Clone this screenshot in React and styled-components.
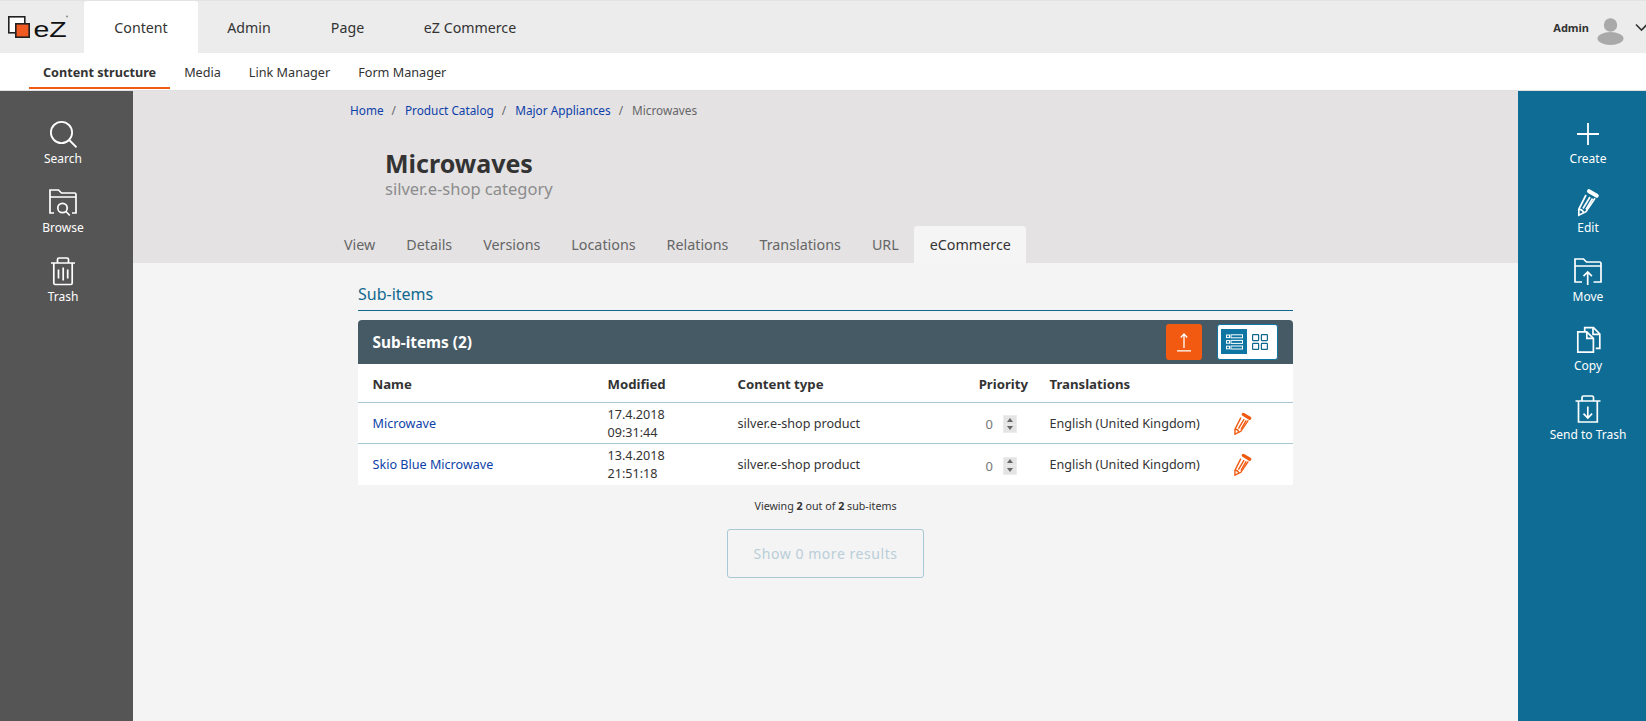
import React from 'react'
import styled, { createGlobalStyle } from 'styled-components'

const Global = createGlobalStyle`
  html, body { margin: 0; padding: 0; height: 100%; background: #f4f4f4; }
  body { font-family: "Noto Sans", "Open Sans", sans-serif; color: #333; overflow: hidden; }
  a { text-decoration: none; }
`

const Page = styled.div`
  display: flex;
  flex-direction: column;
  height: 721px;
`

const TopBar = styled.header`
  display: flex;
  align-items: stretch;
  height: 52px;
  background: #ececec;
  border-top: 1px solid #e4e2e3;
  flex: none;
`

const LogoBox = styled.div`
  width: 84px;
  padding: 13px 0 0 7px;
  box-sizing: border-box;
`

const TopTab = styled.a`
  display: flex;
  align-items: center;
  justify-content: center;
  width: ${p => p.$w}px;
  font-size: 14.2px;
  color: #333;
  background: ${p => (p.$active ? '#fff' : 'transparent')};
  border-radius: 3px 3px 0 0;
`

const UserBox = styled.div`
  margin-left: auto;
  margin-right: -2px;
  display: flex;
  align-items: center;
  font-size: 11px;
  font-weight: 700;
  color: #333;
`

const SubBar = styled.nav`
  display: flex;
  height: 37px;
  padding-left: 29px;
  background: #fff;
  flex: none;
  border-bottom: 1px solid #e0e0e0;
`

const SubLink = styled.a`
  display: flex;
  align-items: center;
  box-sizing: border-box;
  height: 36px;
  padding: 4px 14px 0;
  font-size: 12.65px;
  font-weight: ${p => (p.$active ? 700 : 400)};
  color: #333;
  border-bottom: 2px solid ${p => (p.$active ? '#f15a10' : 'transparent')};
`

const Body = styled.div`
  display: flex;
  flex: 1;
  min-height: 0;
`

const Rail = styled.aside`
  width: ${p => p.$w}px;
  flex: none;
  box-sizing: border-box;
  padding: 27px ${p => p.$padRight || 0}px 0 ${p => p.$padLeft || 0}px;
  background: ${p => p.$bg};
  display: flex;
  flex-direction: column;
  align-items: center;
  gap: 10px;
`

const RailItem = styled.a`
  display: flex;
  flex-direction: column;
  align-items: center;
  height: 59px;
  color: #fff;
  font-size: 12px;
  line-height: 16px;
  white-space: nowrap;
  svg { display: block; margin-bottom: 3px; }
`

const Main = styled.main`
  flex: 1;
  min-width: 0;
`

const Head = styled.section`
  height: 172px;
  background: #e4e2e3;
  display: flex;
  flex-direction: column;
  padding-left: 210px;
`

const Crumbs = styled.ol`
  display: flex;
  list-style: none;
  margin: 0 0 0 7px;
  padding: 10px 0 0;
  height: 19px;
  font-size: 11.8px;
  line-height: 18px;
  color: #666;
`

const Crumb = styled.li`
  a { color: #0d3fa8; }
  & + &::before {
    content: '/';
    padding: 0 9px 0 8px;
    color: #666;
  }
`

const Title = styled.h1`
  margin: 27px 0 0 42px;
  font-size: 25px;
  line-height: 32px;
  font-weight: 700;
  color: #333;
`

const Subtitle = styled.div`
  margin-left: 42px;
  font-size: 16.5px;
  line-height: 20px;
  color: #8c8c8c;
`

const Tabs = styled.div`
  display: flex;
  margin: auto 0 0 1px;
  height: 37px;
`

const Tab = styled.a`
  display: flex;
  align-items: center;
  padding: 0 15.5px;
  font-size: 14.3px;
  color: ${p => (p.$active ? '#333' : '#666')};
  background: ${p => (p.$active ? '#f5f5f5' : 'transparent')};
  border-radius: 3px 3px 0 0;
  &:first-child { padding-left: 0; }
`

const Content = styled.section`
  width: 935px;
  margin-left: 225px;
`

const SectionTitle = styled.h2`
  margin: 0 0 9px;
  padding: 20px 0 4px;
  font-size: 16px;
  line-height: 23px;
  font-weight: 400;
  color: #10688f;
  border-bottom: 1px solid #10688f;
`

const PanelBar = styled.div`
  display: flex;
  align-items: center;
  height: 44px;
  padding: 0 15px 0 14.5px;
  background: #455a65;
  border-radius: 4px 4px 0 0;
  color: #fff;
  font-size: 15.4px;
  font-weight: 700;
`

const UploadBtn = styled.button`
  margin-left: auto;
  width: 36px;
  height: 36px;
  padding: 0;
  display: flex;
  align-items: center;
  justify-content: center;
  background: #f15a10;
  border: 0;
  border-radius: 3px;
`

const Toggle = styled.div`
  margin-left: 15px;
  width: 61px;
  height: 36px;
  box-sizing: border-box;
  padding: 4px 4px 5px 3px;
  display: flex;
  background: #fff;
  border: 1px solid #0f76a3;
  border-radius: 3px;
`

const ToggleOpt = styled.span`
  display: flex;
  align-items: center;
  justify-content: center;
  width: 26px;
  height: 100%;
  background: ${p => (p.$active ? '#0f76a3' : 'transparent')};
`

const Row = styled.div`
  display: grid;
  grid-template-columns: 235px 130px 232px 80px 196px 1fr;
  align-items: center;
  height: ${p => p.$h}px;
  background: #fff;
  font-size: 12.6px;
  line-height: 18px;
  border-bottom: ${p => (p.$last ? '0' : '1px solid #a9c8d6')};
  box-sizing: border-box;
`

const HeadCell = styled.div`
  font-size: 13.2px;
  font-weight: 700;
  padding-top: 1px;
  padding-left: ${p => (p.$right ? 0 : 14.5)}px;
  padding-right: ${p => (p.$right ? 7 : 0)}px;
  text-align: ${p => (p.$right ? 'right' : 'left')};
`

const Cell = styled.div`
  padding: 1px 0 0 14.5px;
`

const NameLink = styled.a`
  color: #0d3fa8;
`

const PriorityCell = styled.div`
  display: flex;
  justify-content: flex-end;
  align-items: center;
  gap: 10px;
  padding: 2px 18px 0 0;
  color: #777;
  font-size: 13px;
`

const Spinner = styled.span`
  display: flex;
  flex-direction: column;
  gap: 1px;
  width: 14px;
  height: 18px;
  padding: 1px;
  background: #ececec;
  box-sizing: border-box;
`

const SpinButton = styled.span`
  flex: 1;
  background: #e4e4e4;
  display: flex;
  align-items: center;
  justify-content: center;
  &::after {
    content: '';
    border-left: 3.5px solid transparent;
    border-right: 3.5px solid transparent;
    border-${p => (p.$down ? 'top' : 'bottom')}: 4px solid #666;
  }
`

const EditCell = styled.div`
  svg { display: block; }
`

const Viewing = styled.p`
  margin: 12px 0 14px;
  text-align: center;
  font-size: 10.7px;
  line-height: 18px;
  color: #333;
`

const MoreBtn = styled.button`
  display: block;
  margin: 0 auto;
  width: 197px;
  height: 49px;
  background: transparent;
  border: 1px solid #a9c8d6;
  border-radius: 3px;
  color: #b9ced8;
  font-family: inherit;
  font-size: 14px;
  letter-spacing: 0.55px;
`

const Logo = () => (
  <svg width="64" height="30" viewBox="0 0 64 30">
    <rect x="1.8" y="2.8" width="16" height="16" fill="#fff" stroke="#222" strokeWidth="1.6" />
    <rect x="8.8" y="9.8" width="13.4" height="13.4" fill="#f15a22" stroke="#222" strokeWidth="1.6" />
    <text transform="translate(26.5 23) scale(1 .8)" fontFamily="Liberation Sans, sans-serif" fontSize="28.5" fill="#111">eZ</text>
    <circle cx="60" cy="2.5" r="1" fill="#888" />
  </svg>
)

const Avatar = () => (
  <svg width="27" height="27" viewBox="0 0 27 27" style={{ margin: '9px 11px 0 8px' }}>
    <circle cx="13.5" cy="7" r="6.7" fill="#a9a9a9" />
    <ellipse cx="13.5" cy="20.5" rx="13" ry="6.5" fill="#a9a9a9" />
  </svg>
)

const Chevron = () => (
  <svg width="13" height="9" viewBox="0 0 13 9">
    <path d="M1 1.5l5.5 5.5L12 1.5" fill="none" stroke="#333" strokeWidth="1.6" />
  </svg>
)

const base = { fill: 'none', stroke: '#fff', strokeWidth: 1.7 }

const SearchIcon = () => (
  <svg width="28" height="30" viewBox="0 0 28 30" {...base} strokeWidth="1.8">
    <circle cx="12.5" cy="14.5" r="10.6" />
    <path d="M20.2 22l7.3 7.3" />
  </svg>
)

const BrowseIcon = () => (
  <svg width="28" height="30" viewBox="0 0 28 30" {...base}>
    <path d="M1 10V3h8.5L12.5 6H25.5Q27 6 27 7.5V10M1 10h26" />
    <path d="M5 26H1V10M23 26H27V10" />
    <circle cx="13.5" cy="21" r="4.7" />
    <path d="M17 24.5l3.8 4" />
  </svg>
)

const TrashIcon = () => (
  <svg width="28" height="30" viewBox="0 0 28 30" {...base}>
    <path d="M2 7h24M8.5 7V3.5A1.5 1.5 0 0 1 10 2h8a1.5 1.5 0 0 1 1.5 1.5V7" />
    <path d="M4.8 7v20a1.5 1.5 0 0 0 1.5 1.5h15.4a1.5 1.5 0 0 0 1.5-1.5V7" />
    <path d="M9.5 13.5v9M14.2 11.5v13M18.7 13.5v9" />
  </svg>
)

const PlusIcon = () => (
  <svg width="28" height="30" viewBox="0 0 28 30" {...base} strokeWidth="1.8">
    <path d="M14 5v22M3 16h22" />
  </svg>
)

const PencilIcon = ({ color = '#fff', size = 28 }) => (
  <svg width={size} height={size * 30 / 28} viewBox="0 0 28 30" fill="none" stroke={color} strokeWidth="1.7">
    <path d="M12 8L4.8 22.3V28.2L12 24.7 21 11.3" />
    <path d="M16 10L9 21.5M18.5 11.5L12 22.5M4.8 22.3C7 22.3 9 23.5 9.5 25.8" />
    <path d="M15 4.2l7.8 4.6" strokeWidth="4" strokeLinecap="round" />
  </svg>
)

const MoveIcon = () => (
  <svg width="28" height="30" viewBox="0 0 28 30" {...base}>
    <path d="M1 10V3h8.5L12.5 6H25.5Q27 6 27 7.5V10M1 10h26" />
    <path d="M8 26H1V10M19.5 26H27V10" />
    <path d="M13.7 29V16M9.5 20.2L13.7 16l4.2 4.2" />
  </svg>
)

const CopyIcon = () => (
  <svg width="28" height="30" viewBox="0 0 28 30" {...base}>
    <path d="M3.8 6.8h9l6.6 6.6V27.2H3.8z" />
    <path d="M12.8 7v6.4h6.4" />
    <path d="M10.7 6.5V2.6h8.8L25.8 9V23.3H21.8" />
    <path d="M19 3v6.4h6.4" />
  </svg>
)

const SendTrashIcon = () => (
  <svg width="28" height="30" viewBox="0 0 28 30" {...base}>
    <path d="M1.5 7h25M8 7V3.5A1.5 1.5 0 0 1 9.5 2h8.5A1.5 1.5 0 0 1 19.5 3.5V7" />
    <path d="M4.5 7v21h18.8V7" />
    <path d="M13.8 12.5V24M9.5 19.7L13.8 24l4.3-4.3" />
  </svg>
)

const UploadIcon = () => (
  <svg width="14" height="20" viewBox="0 0 14 20" fill="none" stroke="#fff" strokeWidth="1.3">
    <path d="M7 16V2M3.8 5.5L7 2l3.2 3.5M0 18.8h14" />
  </svg>
)

const ListIcon = () => (
  <svg width="17" height="16" viewBox="0 0 17 16" fill="none" stroke="#fff" strokeWidth="1">
    <rect x="0.5" y="1" width="3" height="2.6" />
    <rect x="0.5" y="6.6" width="3" height="2.6" />
    <rect x="0.5" y="12.2" width="3" height="2.6" />
    <rect x="5" y="0.8" width="11.5" height="3" />
    <rect x="5" y="6.4" width="11.5" height="3" />
    <rect x="5" y="12" width="11.5" height="3" />
  </svg>
)

const GridIcon = () => (
  <svg width="16" height="16" viewBox="0 0 16 16" fill="none" stroke="#10688f" strokeWidth="1.2">
    <rect x="0.6" y="0.6" width="6" height="6" rx="0.5" />
    <rect x="9.4" y="0.6" width="6" height="6" rx="0.5" />
    <rect x="0.6" y="9.4" width="6" height="6" rx="0.5" />
    <rect x="9.4" y="9.4" width="6" height="6" rx="0.5" />
  </svg>
)

const leftItems = [
  ['Search', SearchIcon],
  ['Browse', BrowseIcon],
  ['Trash', TrashIcon],
]

const rightItems = [
  ['Create', PlusIcon],
  ['Edit', PencilIcon],
  ['Move', MoveIcon],
  ['Copy', CopyIcon],
  ['Send to Trash', SendTrashIcon],
]

const tabs = ['View', 'Details', 'Versions', 'Locations', 'Relations', 'Translations', 'URL']

const rows = [
  { name: 'Microwave', date: '17.4.2018', time: '09:31:44' },
  { name: 'Skio Blue Microwave', date: '13.4.2018', time: '21:51:18', last: true },
]

const App = () => (
  <Page>
    <Global />
    <TopBar>
      <LogoBox><Logo /></LogoBox>
      <TopTab $active $w={114}>Content</TopTab>
      <TopTab $w={102}>Admin</TopTab>
      <TopTab $w={95}>Page</TopTab>
      <TopTab $w={150}>eZ Commerce</TopTab>
      <UserBox>Admin<Avatar /><Chevron /></UserBox>
    </TopBar>
    <SubBar>
      <SubLink $active>Content structure</SubLink>
      <SubLink>Media</SubLink>
      <SubLink>Link Manager</SubLink>
      <SubLink>Form Manager</SubLink>
    </SubBar>
    <Body>
      <Rail $w={133} $bg="#555" $padRight={7}>
        {leftItems.map(([label, Icon]) => (
          <RailItem key={label}><Icon />{label}</RailItem>
        ))}
      </Rail>
      <Main>
        <Head>
          <Crumbs>
            <Crumb><a>Home</a></Crumb>
            <Crumb><a>Product Catalog</a></Crumb>
            <Crumb><a>Major Appliances</a></Crumb>
            <Crumb>Microwaves</Crumb>
          </Crumbs>
          <Title>Microwaves</Title>
          <Subtitle>silver.e-shop category</Subtitle>
          <Tabs>
            {tabs.map(t => <Tab key={t}>{t}</Tab>)}
            <Tab $active>eCommerce</Tab>
          </Tabs>
        </Head>
        <Content>
          <SectionTitle>Sub-items</SectionTitle>
          <PanelBar>
            Sub-items (2)
            <UploadBtn><UploadIcon /></UploadBtn>
            <Toggle>
              <ToggleOpt $active><ListIcon /></ToggleOpt>
              <ToggleOpt><GridIcon /></ToggleOpt>
            </Toggle>
          </PanelBar>
          <Row $h={39}>
            <HeadCell>Name</HeadCell>
            <HeadCell>Modified</HeadCell>
            <HeadCell>Content type</HeadCell>
            <HeadCell $right>Priority</HeadCell>
            <HeadCell>Translations</HeadCell>
            <div />
          </Row>
          {rows.map(r => (
            <Row key={r.name} $h={41} $last={r.last}>
              <Cell><NameLink>{r.name}</NameLink></Cell>
              <Cell>{r.date}<br />{r.time}</Cell>
              <Cell>silver.e-shop product</Cell>
              <PriorityCell>
                0
                <Spinner><SpinButton /><SpinButton $down /></Spinner>
              </PriorityCell>
              <Cell>English (United Kingdom)</Cell>
              <EditCell><PencilIcon color="#f15a10" size={23} /></EditCell>
            </Row>
          ))}
          <Viewing>Viewing <b>2</b> out of <b>2</b> sub-items</Viewing>
          <MoreBtn disabled>Show 0 more results</MoreBtn>
        </Content>
      </Main>
      <Rail $w={128} $bg="#0f6c94" $padLeft={12}>
        {rightItems.map(([label, Icon]) => (
          <RailItem key={label}><Icon />{label}</RailItem>
        ))}
      </Rail>
    </Body>
  </Page>
)

export default App
